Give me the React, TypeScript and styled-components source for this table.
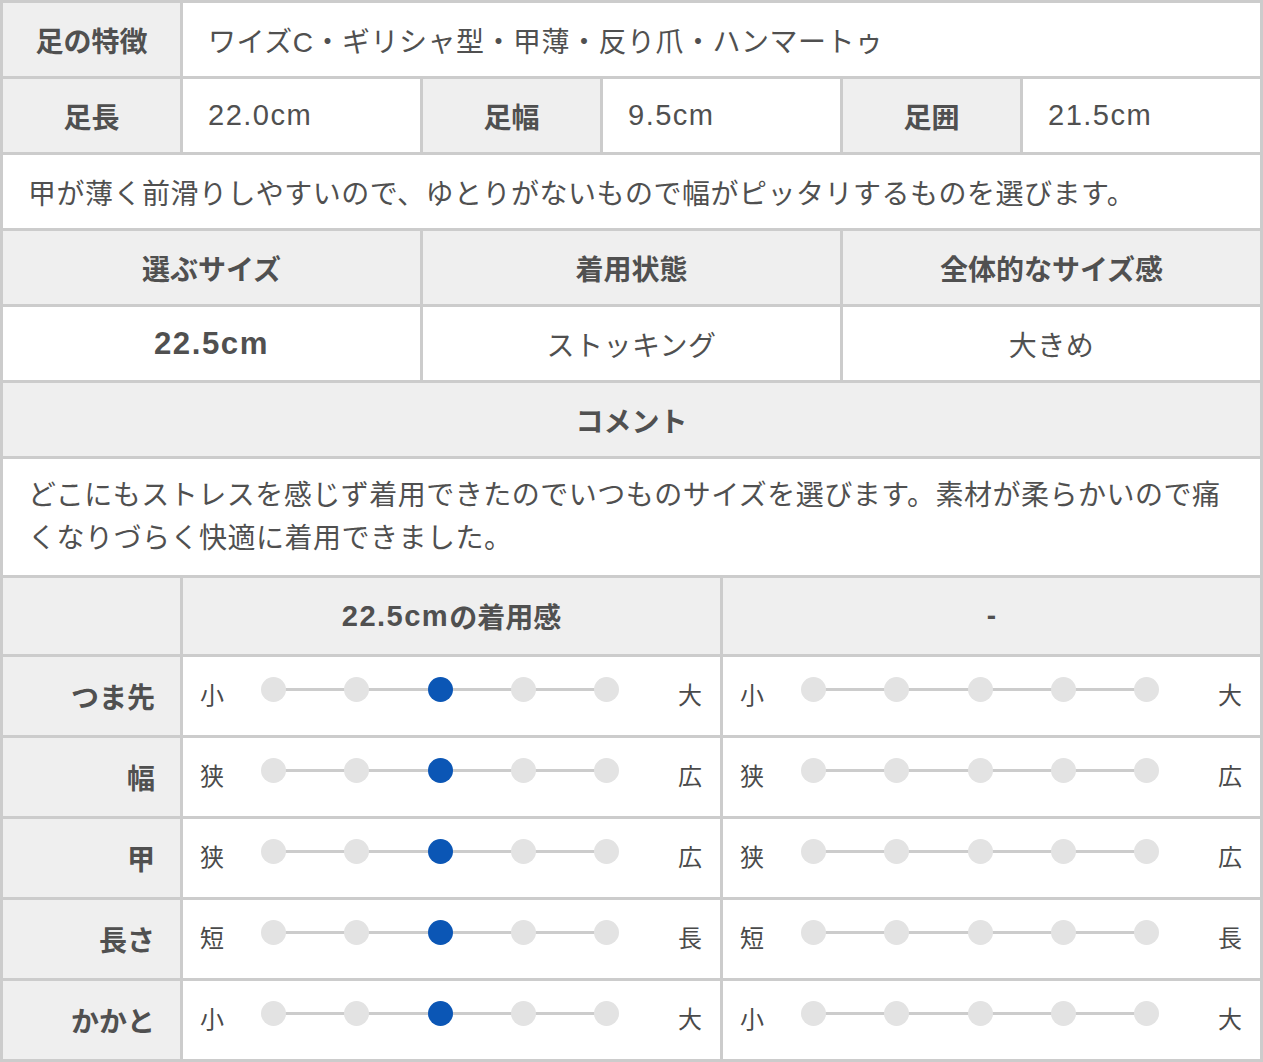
import React from "react";
import styled, { createGlobalStyle } from "styled-components";

const GlobalStyle = createGlobalStyle`
  body {
    margin: 0;
    background: #fff;
    font-family: "Liberation Sans", "Noto Sans CJK JP", sans-serif;
    color: #505050;
  }
`;

const Table = styled.div`
  width: 1263px;
  box-sizing: border-box;
  background: #cccccc;
  padding: 3px;
  display: flex;
  flex-direction: column;
  gap: 3px;
`;

const Row = styled.div<{ $cols: string; $h: number }>`
  display: grid;
  grid-template-columns: ${(p) => p.$cols};
  gap: 3px;
  min-height: ${(p) => p.$h}px;
`;

const Cell = styled.div<{ $head?: boolean; $align?: "left" | "center" | "right"; $big?: boolean }>`
  background: ${(p) => (p.$head ? "#efefef" : "#fff")};
  font-weight: ${(p) => (p.$head || p.$big ? 700 : 400)};
  font-size: ${(p) => (p.$big ? 30 : 28)}px;
  letter-spacing: ${(p) => (p.$head ? "0" : "0.5px")};
  display: flex;
  align-items: center;
  justify-content: ${(p) =>
    p.$align === "center" ? "center" : p.$align === "right" ? "flex-end" : "flex-start"};
  padding: 0 25px;
  box-sizing: border-box;
  white-space: nowrap;
`;

const TextCell = styled.div`
  background: #fff;
  font-size: 28px;
  letter-spacing: 0.5px;
  line-height: 43px;
  padding: 15px 25px;
  display: flex;
  align-items: center;
`;

const Num = styled.span`
  font-size: 1.04em;
  letter-spacing: 0.05em;
`;

const SliderCell = styled.div`
  background: #fff;
  display: grid;
  grid-template-columns: 24px 1fr 24px;
  align-items: center;
  padding: 0 18px 0 17px;
`;

const EndLabel = styled.span`
  font-size: 24px;
  line-height: 1;
  color: #4a4a4a;
`;

const Track = styled.div`
  position: relative;
  display: flex;
  justify-content: space-between;
  align-items: center;
  margin: 0 59px 14px 37px;

  &::before {
    content: "";
    position: absolute;
    left: 12px;
    right: 12px;
    top: 50%;
    height: 3px;
    margin-top: -1.5px;
    background: #cccccc;
  }
`;

const Dot = styled.span<{ $on?: boolean }>`
  position: relative;
  width: 25px;
  height: 25px;
  border-radius: 50%;
  background: ${(p) => (p.$on ? "#0b56b5" : "#e3e3e3")};
`;

const fitRows = [
  { name: "つま先", lo: "小", hi: "大" },
  { name: "幅", lo: "狭", hi: "広" },
  { name: "甲", lo: "狭", hi: "広" },
  { name: "長さ", lo: "短", hi: "長" },
  { name: "かかと", lo: "小", hi: "大" },
];

const Slider = ({ lo, hi, value }: { lo: string; hi: string; value: number }) => (
  <SliderCell>
    <EndLabel>{lo}</EndLabel>
    <Track>
      {[0, 1, 2, 3, 4].map((i) => (
        <Dot key={i} $on={i === value} />
      ))}
    </Track>
    <EndLabel>{hi}</EndLabel>
  </SliderCell>
);

const App = () => {
  return (
    <>
      <GlobalStyle />
      <Table>
        <Row $cols="177px 1fr" $h={73}>
          <Cell $head $align="center">足の特徴</Cell>
          <Cell>ワイズC・ギリシャ型・甲薄・反り爪・ハンマートゥ</Cell>
        </Row>
        <Row $cols="177px 237px 177px 237px 177px 237px" $h={73}>
          <Cell $head $align="center">足長</Cell>
          <Cell><Num>22.0cm</Num></Cell>
          <Cell $head $align="center">足幅</Cell>
          <Cell><Num>9.5cm</Num></Cell>
          <Cell $head $align="center">足囲</Cell>
          <Cell><Num>21.5cm</Num></Cell>
        </Row>
        <Row $cols="1fr" $h={73}>
          <Cell>甲が薄く前滑りしやすいので、ゆとりがないもので幅がピッタリするものを選びます。</Cell>
        </Row>
        <Row $cols="1fr 1fr 1fr" $h={73}>
          <Cell $head $align="center">選ぶサイズ</Cell>
          <Cell $head $align="center">着用状態</Cell>
          <Cell $head $align="center">全体的なサイズ感</Cell>
        </Row>
        <Row $cols="1fr 1fr 1fr" $h={73}>
          <Cell $big $align="center"><Num>22.5cm</Num></Cell>
          <Cell $align="center">ストッキング</Cell>
          <Cell $align="center">大きめ</Cell>
        </Row>
        <Row $cols="1fr" $h={73}>
          <Cell $head $align="center">コメント</Cell>
        </Row>
        <Row $cols="1fr" $h={116}>
          <TextCell>
            どこにもストレスを感じず着用できたのでいつものサイズを選びます。素材が柔らかいので痛くなりづらく快適に着用できました。
          </TextCell>
        </Row>
        <Row $cols="177px 1fr 1fr" $h={76}>
          <Cell $head />
          <Cell $head $align="center"><Num>22.5cm</Num>の着用感</Cell>
          <Cell $head $align="center">-</Cell>
        </Row>
        {fitRows.map((r) => (
          <Row key={r.name} $cols="177px 1fr 1fr" $h={78}>
            <Cell $head $align="right">{r.name}</Cell>
            <Slider lo={r.lo} hi={r.hi} value={2} />
            <Slider lo={r.lo} hi={r.hi} value={-1} />
          </Row>
        ))}
      </Table>
    </>
  );
};

export default App;
